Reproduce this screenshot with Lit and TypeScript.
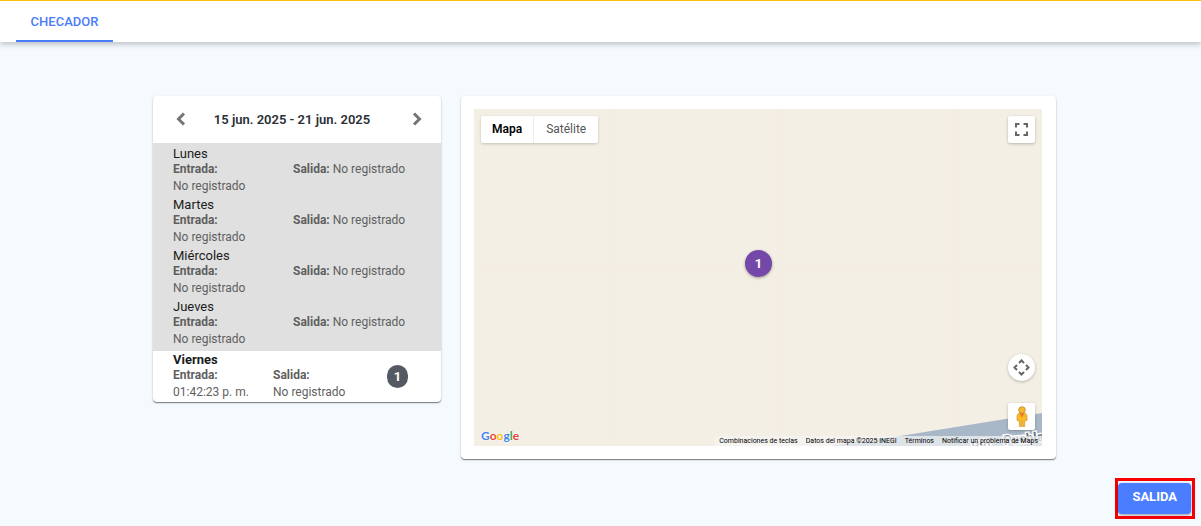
import { LitElement, html, svg, css, nothing } from "lit";
import { customElement, property } from "lit/decorators.js";

interface Day {
  name: string;
  entry: string;
  exit: string;
  badge?: number;
}

const MISSING = "No registrado";

const DAYS: Day[] = [
  { name: "Lunes", entry: MISSING, exit: MISSING },
  { name: "Martes", entry: MISSING, exit: MISSING },
  { name: "Miércoles", entry: MISSING, exit: MISSING },
  { name: "Jueves", entry: MISSING, exit: MISSING },
  { name: "Viernes", entry: "01:42:23 p. m.", exit: MISSING, badge: 1 },
];

@customElement("week-card")
export class WeekCard extends LitElement {
  @property({ attribute: false }) days: Day[] = [];
  @property() range = "";

  static styles = css`
    :host {
      display: block;
      background: #fff;
      border-radius: 4px;
      overflow: hidden;
      box-shadow: 0 1px 1px rgba(0, 0, 0, 0.45), 0 1px 3px rgba(0, 0, 0, 0.12);
    }
    .nav {
      display: flex;
      align-items: center;
      height: 47px;
      padding: 0 12px 0 16px;
    }
    .nav h2 {
      flex: 1;
      margin: 0;
      padding-right: 14px;
      font-size: 13px;
      font-weight: 600;
      color: #2b2f36;
      text-align: center;
    }
    .arrow {
      display: flex;
      padding: 4px;
      border: 0;
      background: none;
      color: #757575;
      cursor: pointer;
    }
    .days {
      margin: 0;
      padding: 0;
      list-style: none;
    }
    .past {
      padding: 1px 0 3px;
      background: #e0e0e0;
    }
    .day {
      display: flex;
      padding: 2px 20px 0;
      color: #5f5f5f;
      font-size: 12px;
      line-height: 17px;
    }
    .body {
      flex: 1;
    }
    .name {
      margin: 0;
      font-size: 13px;
      font-weight: 400;
      line-height: 15px;
      color: #1c1c1c;
    }
    .times {
      display: grid;
      grid-template-columns: 100px 1fr;
      column-gap: 20px;
    }
    .value {
      display: block;
    }
    .today {
      padding: 1px 20px;
    }
    .today .name {
      font-weight: 700;
    }
    .today .times {
      column-gap: 0;
    }
    .badge {
      align-self: center;
      width: 21px;
      margin-right: 13px;
      border-radius: 12px;
      background: #555962;
      color: #fff;
      font-size: 13px;
      font-weight: 700;
      line-height: 23px;
      text-align: center;
    }
  `;

  private arrow(label: string, d: string) {
    return html`<button class="arrow" type="button" aria-label=${label}>
      <svg width="16" height="16" viewBox="0 0 16 16" fill="none" stroke="currentColor" stroke-width="3">
        <path d=${d} />
      </svg>
    </button>`;
  }

  private day(d: Day) {
    const today = d.badge !== undefined;
    return html`<li class="day ${today ? "today" : ""}">
      <div class="body">
        <h3 class="name">${d.name}</h3>
        <div class="times">
          <div><b>Entrada:</b> <span class="value">${d.entry}</span></div>
          <div><b>Salida:</b> <span class=${today ? "value" : ""}>${d.exit}</span></div>
        </div>
      </div>
      ${today ? html`<span class="badge">${d.badge}</span>` : nothing}
    </li>`;
  }

  render() {
    const past = this.days.filter((d) => d.badge === undefined);
    const current = this.days.filter((d) => d.badge !== undefined);
    return html`
      <div class="nav">
        ${this.arrow("Semana anterior", "M11 1.500 5.500 7 11 12.500")}
        <h2>${this.range}</h2>
        ${this.arrow("Semana siguiente", "M5 1.500 10.500 7 5 12.500")}
      </div>
      <ul class="days past">${past.map((d) => this.day(d))}</ul>
      <ul class="days">${current.map((d) => this.day(d))}</ul>
    `;
  }
}

@customElement("map-card")
export class MapCard extends LitElement {
  static styles = css`
    :host {
      display: block;
      padding: 13px 14px 13px 13px;
      background: #fff;
      border-radius: 4px;
      box-shadow: 0 1px 1px rgba(0, 0, 0, 0.45), 0 1px 3px rgba(0, 0, 0, 0.12);
    }
    .map {
      position: relative;
      height: 337px;
      overflow: hidden;
      background: #f4efe4;
    }
    .water {
      position: absolute;
      right: 0;
      bottom: 0;
    }
    .types {
      position: absolute;
      top: 7px;
      left: 7px;
      display: flex;
      border-radius: 2px;
      box-shadow: 0 1px 3px rgba(0, 0, 0, 0.2);
    }
    .type {
      height: 27px;
      padding: 0 12px;
      border: 0;
      background: #fff;
      color: #565656;
      font: 400 12px/27px Roboto, sans-serif;
      cursor: pointer;
    }
    .type:first-child {
      padding: 0 11px;
      border-radius: 2px 0 0 2px;
      border-right: 1px solid #eee;
      color: #000;
      font-weight: 600;
    }
    .type:last-child {
      border-radius: 0 2px 2px 0;
    }
    .control {
      position: absolute;
      right: 7px;
      display: flex;
      align-items: center;
      justify-content: center;
      width: 27px;
      height: 27px;
      padding: 0;
      border: 0;
      border-radius: 2px;
      background: #fff;
      color: #666;
      box-shadow: 0 1px 3px rgba(0, 0, 0, 0.25);
      cursor: pointer;
    }
    .full {
      top: 7px;
    }
    .pan {
      bottom: 65px;
      border-radius: 50%;
    }
    .street {
      bottom: 16px;
    }
    .pin {
      position: absolute;
      top: 141px;
      left: calc(50% - 13px);
      width: 27px;
      border-radius: 50%;
      background: #7448a8;
      color: #fff;
      font-size: 13px;
      font-weight: 700;
      line-height: 27px;
      text-align: center;
      box-shadow: 0 1px 3px rgba(0, 0, 0, 0.35);
    }
    .brand {
      position: absolute;
      left: 7px;
      bottom: 2px;
      font: 700 12px/16px Lato, sans-serif;
      text-decoration: none;
      text-shadow: 0 0 1px #fff, 0 0 2px #fff;
    }
    .blue {
      color: #4285f4;
    }
    .red {
      color: #ea4335;
    }
    .yellow {
      color: #fbbc04;
    }
    .green {
      color: #34a853;
    }
    .legal {
      position: absolute;
      right: 0;
      bottom: 0;
      display: flex;
      gap: 8px;
      padding: 0 4px;
      background: rgba(245, 245, 245, 0.7);
      font-size: 7px;
      line-height: 10px;
      white-space: nowrap;
    }
    .legal a,
    .keys {
      color: #000;
      text-decoration: none;
    }
    .keys {
      padding: 0;
      border: 0;
      background: none;
      font: inherit;
    }
    .place {
      font: 700 13px Roboto, sans-serif;
      fill: #68727f;
      stroke: #fff;
      stroke-width: 3px;
      paint-order: stroke;
    }
  `;

  render() {
    const corners = svg`<path d="M1 4.500V1h3.500M8.500 1H12v3.500M12 8.500V12H8.500M4.500 12H1V8.500" />`;
    return html`
      <div class="map">
        <svg class="water" width="568" height="337" viewBox="0 0 568 337" aria-hidden="true">
          <path d="M0 158.500H568M135.500 0V337M308.500 0V337M480.500 0V337" stroke="#f2ece1" fill="none" />
          <path d="M356 337 426 327 568 304V337Z" fill="#a9b8c9" />
          <text class="place" x="498" y="342" transform="rotate(-8 498 342)">Río</text>
          <text class="place" x="530" y="336" transform="rotate(-6 530 336)">Puebla</text>
        </svg>
        <div class="types">
          <button class="type" type="button">Mapa</button>
          <button class="type" type="button">Satélite</button>
        </div>
        <button class="control full" type="button" aria-label="Pantalla completa">
          <svg width="13" height="13" viewBox="0 0 13 13" fill="none" stroke="currentColor" stroke-width="2">${corners}</svg>
        </button>
        <span class="pin">1</span>
        <button class="control pan" type="button" aria-label="Controles de la cámara">
          <svg width="17" height="17" viewBox="0 0 17 17" fill="none" stroke="currentColor" stroke-width="2">
            <path d="M6 4 8.500 1.500 11 4M6 13 8.500 15.500 11 13M4 6 1.500 8.500 4 11M13 6 15.500 8.500 13 11" />
          </svg>
        </button>
        <button class="control street" type="button" aria-label="Street View">
          <svg width="14" height="21" viewBox="0 0 14 21">
            <path d="M3.500 7.500h7q1.500.5 1.500 2.500v4.500h-2L9.500 20.500h-2V15h-1v5.500h-2L4 14.500H2V10q0-2 1.500-2.500Z" fill="#fbb829" stroke="#c98e26" stroke-width=".6" />
            <circle cx="7" cy="4" r="3.300" fill="#fbb829" stroke="#a9812d" stroke-width=".7" />
            <path d="M4.500 7.500h5L7 11.500Z" fill="#ee7b24" />
          </svg>
        </button>
        <a class="brand" href="#" aria-label="Google"><span class="blue">G</span><span class="red">o</span><span class="yellow">o</span><span class="blue">g</span><span class="green">l</span><span class="red">e</span></a>
        <div class="legal">
          <button class="keys" type="button">Combinaciones de teclas</button>
          <span>Datos del mapa ©2025 INEGI</span>
          <a href="#">Términos</a>
          <a href="#">Notificar un problema de Maps</a>
        </div>
      </div>
    `;
  }
}

@customElement("app-root")
export class AppRoot extends LitElement {
  static styles = css`
    :host {
      display: flex;
      flex-direction: column;
      box-sizing: border-box;
      min-height: 100vh;
      background: #f5faff;
      font-family: Roboto, sans-serif;
    }
    .bar {
      display: flex;
      height: 41px;
      padding: 0 16px;
      border-top: 1px solid #ffc107;
      background: #fff;
      box-shadow: 0 2px 6px rgba(0, 0, 0, 0.25);
    }
    .tab {
      box-sizing: border-box;
      min-width: 97px;
      padding: 0 13px;
      border-bottom: 2px solid #4a7dfc;
      color: #4a7dfc;
      font-size: 13px;
      font-weight: 500;
      line-height: 41px;
      text-align: center;
      text-decoration: none;
    }
    .main {
      flex: 1;
      display: flex;
      align-items: flex-start;
      gap: 20px;
      padding: 54px 145px 18px 153px;
    }
    .week {
      flex: 0 0 288px;
    }
    .place {
      flex: 1;
    }
    .foot {
      display: flex;
      justify-content: flex-end;
      padding: 0 6px 7px 0;
    }
    .mark {
      padding: 2px 1px 2px 0;
      border: 3px solid #f80000;
    }
    .exit {
      display: block;
      height: 31px;
      padding: 0 14px 3px;
      border: 0;
      border-radius: 4px;
      background: #4a7dff;
      color: #fff;
      font: 700 13px/28px Roboto, sans-serif;
      box-shadow: 0 1px 3px rgba(0, 0, 0, 0.4);
      cursor: pointer;
    }
  `;

  render() {
    return html`
      <nav class="bar"><a class="tab" href="#">CHECADOR</a></nav>
      <main class="main">
        <week-card class="week" range="15 jun. 2025 - 21 jun. 2025" .days=${DAYS}></week-card>
        <map-card class="place"></map-card>
      </main>
      <footer class="foot">
        <div class="mark"><button class="exit" type="button">SALIDA</button></div>
      </footer>
    `;
  }
}
